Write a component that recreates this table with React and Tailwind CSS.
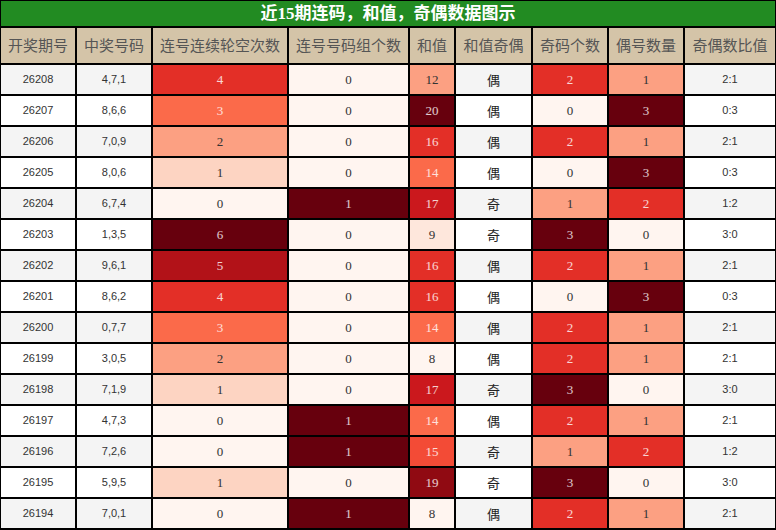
import React from 'react';

const REDS = ['#fff5f0', '#fee0d2', '#fcbba1', '#fc9272', '#fb6a4a', '#ef3b2c', '#cb181d', '#a50f15', '#67000d'];

function hexToRgb(h) {
  return [1, 3, 5].map((i) => parseInt(h.slice(i, i + 2), 16));
}

// matplotlib-style "Reds" scale
function reds(t) {
  const x = Math.max(0, Math.min(1, t)) * (REDS.length - 1);
  const i = Math.min(Math.floor(x), REDS.length - 2);
  const f = x - i;
  const a = hexToRgb(REDS[i]);
  const b = hexToRgb(REDS[i + 1]);
  const c = a.map((v, k) => Math.round(v + (b[k] - v) * f));
  return `rgb(${c[0]},${c[1]},${c[2]})`;
}

const rows = [
  ['26208', '4,7,1', 4, 0, 12, '偶', 2, 1, '2:1'],
  ['26207', '8,6,6', 3, 0, 20, '偶', 0, 3, '0:3'],
  ['26206', '7,0,9', 2, 0, 16, '偶', 2, 1, '2:1'],
  ['26205', '8,0,6', 1, 0, 14, '偶', 0, 3, '0:3'],
  ['26204', '6,7,4', 0, 1, 17, '奇', 1, 2, '1:2'],
  ['26203', '1,3,5', 6, 0, 9, '奇', 3, 0, '3:0'],
  ['26202', '9,6,1', 5, 0, 16, '偶', 2, 1, '2:1'],
  ['26201', '8,6,2', 4, 0, 16, '偶', 0, 3, '0:3'],
  ['26200', '0,7,7', 3, 0, 14, '偶', 2, 1, '2:1'],
  ['26199', '3,0,5', 2, 0, 8, '偶', 2, 1, '2:1'],
  ['26198', '7,1,9', 1, 0, 17, '奇', 3, 0, '3:0'],
  ['26197', '4,7,3', 0, 1, 14, '偶', 2, 1, '2:1'],
  ['26196', '7,2,6', 0, 1, 15, '奇', 1, 2, '1:2'],
  ['26195', '5,9,5', 1, 0, 19, '奇', 3, 0, '3:0'],
  ['26194', '7,0,1', 0, 1, 8, '偶', 2, 1, '2:1'],
];

const headers = ['开奖期号', '中奖号码', '连号连续轮空次数', '连号号码组个数', '和值', '和值奇偶', '奇码个数', '偶号数量', '奇偶数比值'];

function HeatCell({ value, min, max }) {
  const t = (value - min) / (max - min);
  return (
    <div
      className={`flex items-center justify-center font-['Liberation_Serif',serif] text-[13px] ${t > 0.45 ? 'text-white/80' : 'text-[#333]'}`}
      style={{ backgroundColor: reds(t) }}
    >
      {value}
    </div>
  );
}

export default function App() {
  return (
    <div className="w-[776px] h-[530px] bg-black px-px pt-px pb-[2px] grid grid-cols-[74px_74px_134px_119px_44px_75px_74px_74px_90px] grid-rows-[25px_35px_repeat(15,29px)] gap-[2px] overflow-hidden">
      <div className="col-span-9 bg-[#228b22] flex items-center justify-center text-white font-bold text-[17px] font-['Liberation_Serif','Noto_Sans_CJK_SC',sans-serif]">
        近15期连码，和值，奇偶数据图示
      </div>
      {headers.map((h) => (
        <div key={h} className="bg-[#d4c4a8] flex items-center justify-center text-[15px] text-[#555] font-['Noto_Sans_CJK_SC',sans-serif] whitespace-nowrap">
          {h}
        </div>
      ))}
      {rows.map((r, i) => {
        const plain = i % 2 === 0 ? 'bg-[#f4f4f4]' : 'bg-white';
        return (
          <React.Fragment key={r[0]}>
            <div className={`${plain} flex items-center justify-center text-[11px] text-[#333] font-['Liberation_Sans',sans-serif]`}>{r[0]}</div>
            <div className={`${plain} flex items-center justify-center text-[11px] text-[#333] font-['Liberation_Sans',sans-serif]`}>{r[1]}</div>
            <HeatCell value={r[2]} min={0} max={6} />
            <HeatCell value={r[3]} min={0} max={1} />
            <HeatCell value={r[4]} min={8} max={20} />
            <div className={`${plain} flex items-center justify-center text-[13px] text-[#222] font-['Noto_Sans_CJK_SC',sans-serif]`}>{r[5]}</div>
            <HeatCell value={r[6]} min={0} max={3} />
            <HeatCell value={r[7]} min={0} max={3} />
            <div className={`${plain} flex items-center justify-center text-[11px] text-[#333] font-['Liberation_Sans',sans-serif]`}>{r[8]}</div>
          </React.Fragment>
        );
      })}
    </div>
  );
}
